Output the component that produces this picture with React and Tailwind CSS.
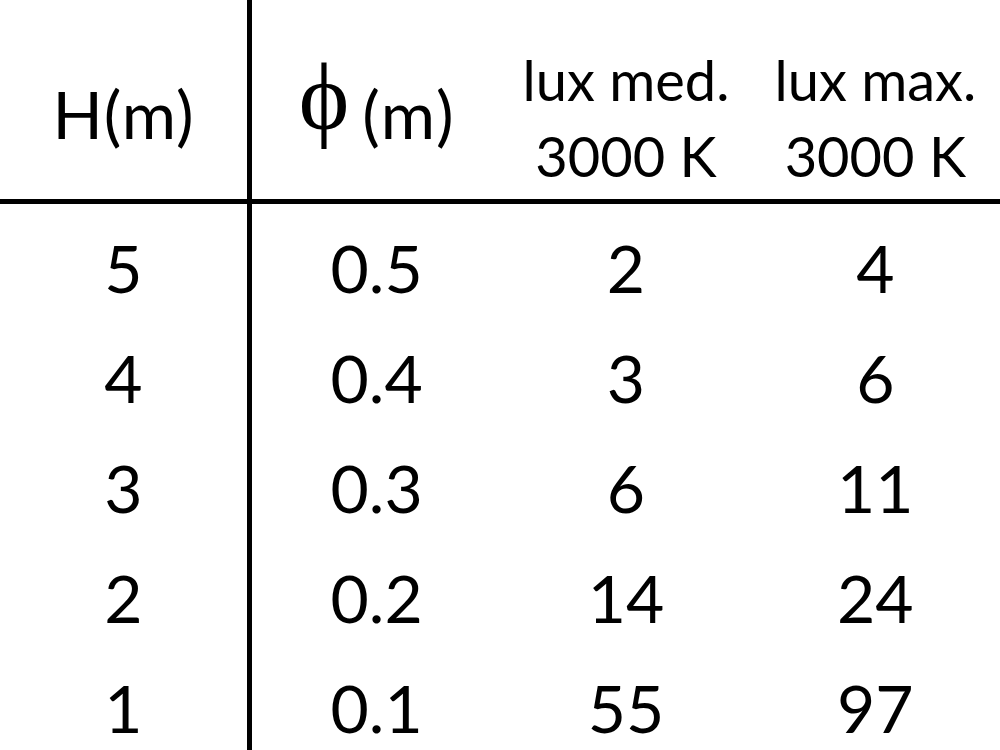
import React from 'react';

const rows = [
  ['5', '0.5', '2', '4'],
  ['4', '0.4', '3', '6'],
  ['3', '0.3', '6', '11'],
  ['2', '0.2', '14', '24'],
  ['1', '0.1', '55', '97'],
];

export default function App() {
  return (
    <div className="w-[1000px] h-[750px] overflow-hidden bg-white text-black font-['Lato',sans-serif]">
      {/* header */}
      <div className="flex h-[204px] border-b-[5px] border-black">
        <div className="w-[252px] shrink-0 border-r-[5px] border-black pt-[81px] text-center text-[66px] leading-none tracking-[1px]">
          H(m)
        </div>
        <div className="flex-1 pt-[81px] text-center whitespace-nowrap text-[66px] leading-none tracking-[1px]">
          <span className="font-['Liberation_Serif',serif] text-[96px] leading-[0] mr-[12px] relative -top-[10px]">ϕ</span>
          <span>(m)</span>
        </div>
        <div className="flex-1 pt-[42px] text-center text-[56px] leading-[76px]">
          <div>lux med.</div>
          <div>3000 K</div>
        </div>
        <div className="flex-1 pt-[42px] text-center text-[56px] leading-[76px]">
          <div>lux max.</div>
          <div>3000 K</div>
        </div>
      </div>

      {/* body */}
      <div className="flex">
        <div className="w-[252px] shrink-0 border-r-[5px] border-black pt-[9px] pb-[40px]">
          {rows.map((r, i) => (
            <div key={i} className="h-[110px] text-center text-[66px] leading-[110px]">{r[0]}</div>
          ))}
        </div>
        {[1, 2, 3].map((c) => (
          <div key={c} className="flex-1 pt-[9px]">
            {rows.map((r, i) => (
              <div key={i} className="h-[110px] text-center text-[66px] leading-[110px]">{r[c]}</div>
            ))}
          </div>
        ))}
      </div>
    </div>
  );
}
